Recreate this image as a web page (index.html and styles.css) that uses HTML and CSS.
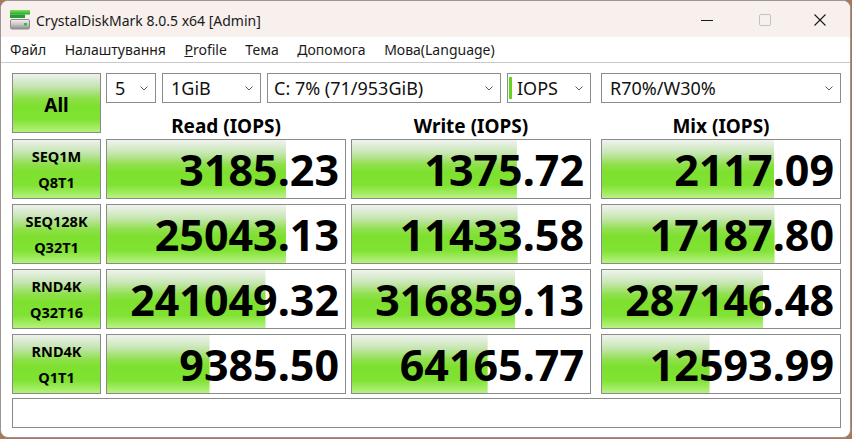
FILE: index.html
```html
<!DOCTYPE html>
<html lang="uk">
<head>
<meta charset="utf-8">
<title>CrystalDiskMark 8.0.5 x64 [Admin]</title>
<link rel="stylesheet" href="styles.css">
</head>
<body>
<div class="window">
  <div class="titlebar">
    <svg class="app-icon" width="20" height="20" viewBox="0 0 20 20">
      <defs>
        <linearGradient id="gbar" x1="0" y1="0" x2="0" y2="1">
          <stop offset="0" stop-color="#7ee05a"/>
          <stop offset="1" stop-color="#1fa82a"/>
        </linearGradient>
        <linearGradient id="gdrive" x1="0" y1="0" x2="0" y2="1">
          <stop offset="0" stop-color="#f2f2f2"/>
          <stop offset="0.5" stop-color="#c8c8c8"/>
          <stop offset="1" stop-color="#8a8a8a"/>
        </linearGradient>
      </defs>
      <rect x="0" y="0" width="20" height="4.5" fill="url(#gbar)"/>
      <rect x="0" y="4.5" width="15" height="3.5" fill="#2a9a36"/>
      <rect x="0.5" y="9.5" width="19" height="9.5" rx="1.5" fill="url(#gdrive)" stroke="#8c8c8c" stroke-width="1"/>
      <rect x="14" y="13" width="3" height="2.5" fill="#30c040"/>
    </svg>
    <span class="title">CrystalDiskMark 8.0.5 x64 [Admin]</span>
    <div class="caption-buttons">
      <span class="cap-btn">
        <svg width="14" height="14" viewBox="0 0 14 14"><line x1="1" y1="7.5" x2="13" y2="7.5" stroke="#1a1a1a" stroke-width="1"/></svg>
      </span>
      <span class="cap-btn">
        <svg width="14" height="14" viewBox="0 0 14 14"><rect x="1.5" y="1.5" width="11" height="11" rx="1.5" fill="none" stroke="#c2c2c2" stroke-width="1"/></svg>
      </span>
      <span class="cap-btn">
        <svg width="14" height="14" viewBox="0 0 14 14"><path d="M1.5 1.5 L12.5 12.5 M12.5 1.5 L1.5 12.5" stroke="#1a1a1a" stroke-width="1.1"/></svg>
      </span>
    </div>
  </div>
  <div class="menubar">
    <span class="menu-item">Файл</span>
    <span class="menu-item">Налаштування</span>
    <span class="menu-item"><u>P</u>rofile</span>
    <span class="menu-item">Тема</span>
    <span class="menu-item">Допомога</span>
    <span class="menu-item">Мова(Language)</span>
  </div>
  <div class="client">
    <div class="row row-top">
      <div class="btn btn-all">All</div>
      <div class="controls">
        <div class="combos">
          <div class="combo-group">
            <div class="combo c-count"><span class="combo-text">5</span><svg class="chev" width="8" height="5" viewBox="0 0 8 5"><polyline points="0.5,0.5 4,4 7.5,0.5" fill="none" stroke="#5a5a5a" stroke-width="1"/></svg></div>
            <div class="combo c-size"><span class="combo-text">1GiB</span><svg class="chev" width="8" height="5" viewBox="0 0 8 5"><polyline points="0.5,0.5 4,4 7.5,0.5" fill="none" stroke="#5a5a5a" stroke-width="1"/></svg></div>
            <div class="combo c-drive"><span class="combo-text">C: 7% (71/953GiB)</span><svg class="chev" width="8" height="5" viewBox="0 0 8 5"><polyline points="0.5,0.5 4,4 7.5,0.5" fill="none" stroke="#5a5a5a" stroke-width="1"/></svg></div>
            <div class="combo c-unit"><span class="unit-mark"></span><span class="combo-text unit-text">IOPS</span><svg class="chev" width="8" height="5" viewBox="0 0 8 5"><polyline points="0.5,0.5 4,4 7.5,0.5" fill="none" stroke="#5a5a5a" stroke-width="1"/></svg></div>
          </div>
          <div class="combo c-mix"><span class="combo-text">R70%/W30%</span><svg class="chev" width="8" height="5" viewBox="0 0 8 5"><polyline points="0.5,0.5 4,4 7.5,0.5" fill="none" stroke="#5a5a5a" stroke-width="1"/></svg></div>
        </div>
        <div class="headers">
          <div class="hdr">Read (IOPS)</div>
          <div class="hdr">Write (IOPS)</div>
          <div class="hdr hdr-mix">Mix (IOPS)</div>
        </div>
      </div>
    </div>

    <div class="row">
      <div class="btn btn-label">SEQ1M<br>Q8T1</div>
      <div class="cell" style="--w:75.4%"><span class="val">3185.23</span></div>
      <div class="cell" style="--w:69.3%"><span class="val">1375.72</span></div>
      <div class="cell cell-mix" style="--w:72.4%"><span class="val">2117.09</span></div>
    </div>
    <div class="row">
      <div class="btn btn-label">SEQ128K<br>Q32T1</div>
      <div class="cell" style="--w:75.3%"><span class="val">25043.13</span></div>
      <div class="cell" style="--w:69.6%"><span class="val">11433.58</span></div>
      <div class="cell cell-mix" style="--w:72.5%"><span class="val">17187.80</span></div>
    </div>
    <div class="row">
      <div class="btn btn-label">RND4K<br>Q32T16</div>
      <div class="cell" style="--w:66.6%"><span class="val">241049.32</span></div>
      <div class="cell" style="--w:68.6%"><span class="val">316859.13</span></div>
      <div class="cell cell-mix" style="--w:67.8%"><span class="val">287146.48</span></div>
    </div>
    <div class="row">
      <div class="btn btn-label">RND4K<br>Q1T1</div>
      <div class="cell" style="--w:43.1%"><span class="val">9385.50</span></div>
      <div class="cell" style="--w:57.0%"><span class="val">64165.77</span></div>
      <div class="cell cell-mix" style="--w:45.2%"><span class="val">12593.99</span></div>
    </div>
    <div class="status"></div>
  </div>
</div>
</body>
</html>
```

FILE: styles.css
```css
* { box-sizing: border-box; }

html, body {
  margin: 0;
  padding: 0;
  width: 852px;
  height: 439px;
  overflow: hidden;
  background: #a9775a;
}

body {
  font-family: "Noto Sans", "Open Sans", sans-serif;
  color: #000;
}

.window {
  width: 851px;
  height: 438px;
  border: 1px solid #9c9490;
  border-radius: 8px;
  overflow: hidden;
  background: #ffffff;
  display: flex;
  flex-direction: column;
}

/* Title bar */
.titlebar {
  height: 36px;
  flex: none;
  background: #f7f0ed;
  display: flex;
  align-items: center;
  padding-left: 9px;
}

.app-icon {
  flex: none;
  margin-top: 1px;
}

.title {
  margin-left: 6px;
  font-size: 14px;
  color: #1a1a1a;
  padding-top: 2px;
}

.caption-buttons {
  margin-left: auto;
  display: flex;
  align-items: center;
  height: 100%;
}

.cap-btn {
  width: 58px;
  height: 100%;
  display: flex;
  align-items: center;
  justify-content: center;
  padding-top: 2px;
}

.cap-btn:last-child {
  width: 56px;
  padding-right: 4px;
}

/* Menu bar */
.menubar {
  height: 26px;
  flex: none;
  display: flex;
  align-items: center;
  padding-left: 0;
  border-bottom: 1px solid #c9c9c9;
  font-size: 14px;
  color: #1a1a1a;
}

.menu-item {
  padding: 0 9.5px 0 9px;
}

/* Client area */
.client {
  flex: 1;
  padding: 10px 0 0 11px;
  display: flex;
  flex-direction: column;
  gap: 5px;
}

.row {
  display: flex;
  gap: 5px;
  height: 60px;
  flex: none;
}

.row-top {
  margin-bottom: 1px;
}

.btn {
  width: 89px;
  height: 60px;
  flex: none;
  border: 1px solid #8a8a8a;
  background: linear-gradient(to bottom, #eef2ee 0%, #c4e4b0 22%, #8fe04c 42%, #7ee02e 55%, #80e232 78%, #b4f27c 100%);
  display: flex;
  align-items: center;
  justify-content: center;
  text-align: center;
  font-weight: 700;
}

.btn-all {
  font-size: 19px;
  padding-top: 3px;
}

.btn-label {
  font-size: 14.5px;
  line-height: 26px;
}

.controls {
  display: flex;
  flex-direction: column;
}

.combos {
  display: flex;
  height: 30px;
  gap: 10px;
}

.combo-group {
  display: flex;
  gap: 6px;
  width: 485px;
}

.combo {
  height: 30px;
  border: 1px solid #8c8c8c;
  background: #fff;
  display: flex;
  align-items: center;
  padding: 0 7px 0 7px;
  font-size: 18px;
  color: #111;
}

.combo-text {
  flex: 1;
  white-space: nowrap;
  line-height: 28px;
}

.chev {
  flex: none;
  margin-top: 1px;
}

.c-count { width: 50px; padding-left: 8px; }
.c-size { width: 99px; padding-left: 8px; }
.c-drive { width: 234px; padding-left: 6px; }
.c-unit { width: 84px; padding-left: 1px; }
.c-mix { width: 240px; padding-left: 8px; }

.unit-mark {
  width: 3px;
  height: 22px;
  background: #66d41e;
  margin-right: 5px;
  flex: none;
}

.headers {
  display: flex;
  gap: 5px;
  margin-top: 12px;
}

.hdr {
  width: 240px;
  text-align: center;
  font-weight: 700;
  font-size: 19px;
  line-height: 22px;
}

.hdr-mix {
  margin-left: 5px;
}

/* Result cells */
.cell {
  width: 240px;
  height: 60px;
  flex: none;
  border: 1px solid #8a8a8a;
  background-color: #fff;
  background-image: linear-gradient(to bottom, #f0f3f0 0%, #c8e6b4 22%, #90e04e 42%, #7ee02e 55%, #80e232 78%, #b8f284 100%);
  background-repeat: no-repeat;
  background-size: var(--w) 100%;
  display: flex;
  align-items: center;
  justify-content: flex-end;
  padding-right: 6px;
}

.cell-mix {
  margin-left: 5px;
}

.val {
  font-size: 43px;
  font-weight: 700;
  line-height: 43px;
  white-space: nowrap;
}

.status {
  width: 829px;
  height: 30px;
  margin-top: -1px;
  border: 1px solid #8a8a8a;
  background: #fff;
}
```
